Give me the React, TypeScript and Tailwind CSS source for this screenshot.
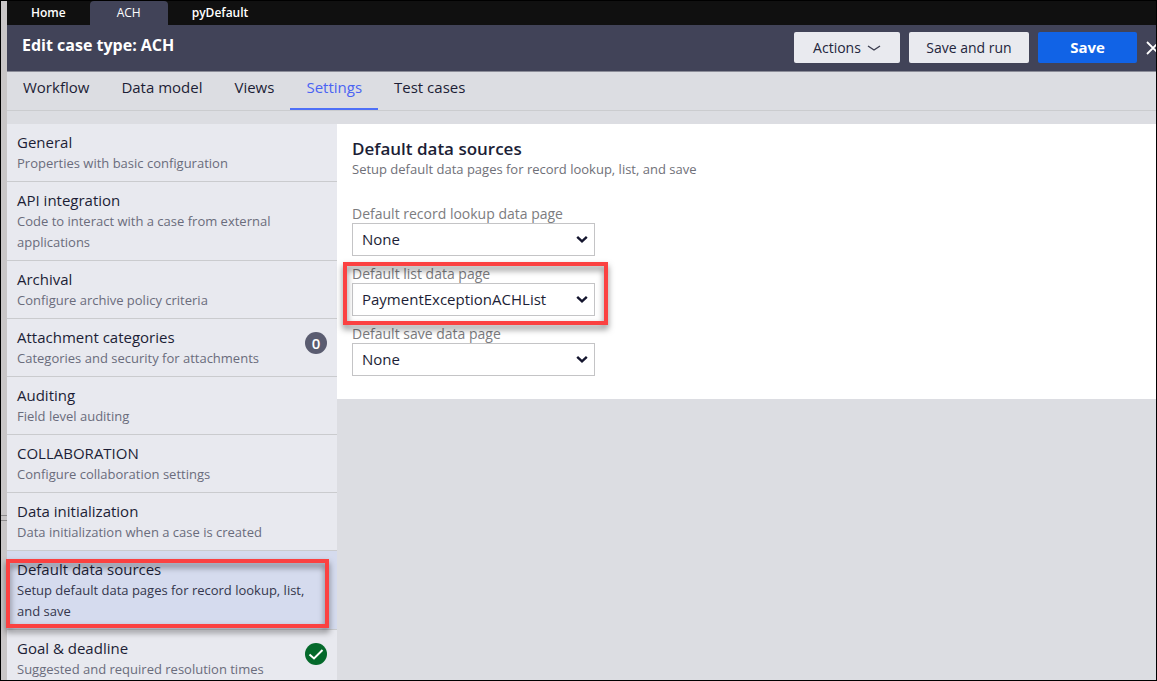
import { useState } from "react";
import clsx from "clsx";

type Setting = {
  title: string;
  description: string;
  count?: number;
  done?: boolean;
};

const recordTabs = ["Home", "ACH", "pyDefault"];

const caseTabs = ["Workflow", "Data model", "Views", "Settings", "Test cases"];

const settings: Setting[] = [
  { title: "General", description: "Properties with basic configuration" },
  {
    title: "API integration",
    description: "Code to interact with a case from external applications",
  },
  { title: "Archival", description: "Configure archive policy criteria" },
  {
    title: "Attachment categories",
    description: "Categories and security for attachments",
    count: 0,
  },
  { title: "Auditing", description: "Field level auditing" },
  { title: "COLLABORATION", description: "Configure collaboration settings" },
  {
    title: "Data initialization",
    description: "Data initialization when a case is created",
  },
  {
    title: "Default data sources",
    description: "Setup default data pages for record lookup, list, and save",
  },
  {
    title: "Goal & deadline",
    description: "Suggested and required resolution times",
    done: true,
  },
];

const fields = [
  { id: "lookup", label: "Default record lookup data page", value: "None" },
  {
    id: "list",
    label: "Default list data page",
    value: "PaymentExceptionACHList",
    marked: true,
  },
  { id: "save", label: "Default save data page", value: "None" },
];

// Red frame that points out a part of the screen
function Callout({ className }: { className: string }) {
  return (
    <div
      className={clsx(
        "pointer-events-none absolute z-10 border-4 border-[#fb4141] drop-shadow-[0_4px_3px_rgba(0,0,0,0.5)]",
        className
      )}
    />
  );
}

function RecordTabs() {
  return (
    <div className="flex h-6 bg-[#101010] text-[12px] text-white">
      {recordTabs.map((tab) => (
        <button
          key={tab}
          className={clsx(
            "leading-6",
            tab === "ACH"
              ? "rounded-t-sm bg-[#414358] px-[27px]"
              : "px-6 font-semibold"
          )}
        >
          {tab}
        </button>
      ))}
    </div>
  );
}

function Header() {
  return (
    <header className="flex h-[47px] items-center justify-between border-b border-[#8b8c98] bg-[#414358] pb-px pl-[15px]">
      <h1 className="flex gap-1 pb-[6px] text-[16px] font-bold text-white">
        <span>Edit case type:</span>
        <span>ACH</span>
      </h1>

      <div className="-mr-[9px] flex shrink-0 items-center gap-[9px] text-[14px] text-[#23253c]">
        <button className="flex h-[31px] w-[106px] items-center justify-center gap-[6px] rounded-xs bg-[#e9eaef]">
          Actions
          <svg width="14" height="8" viewBox="0 0 14 8" fill="none">
            <path d="M1 2 L7 6 L13 2" stroke="#3b3d4e" strokeWidth="1.4" />
          </svg>
        </button>
        <button className="h-[31px] w-[120px] rounded-xs bg-[#e9eaef]">
          Save and run
        </button>
        <button className="h-[31px] w-[99px] rounded-xs bg-[#1163e6] text-[15px] font-bold text-white">
          Save
        </button>
        <button aria-label="Close">
          <svg width="19" height="14" viewBox="0 0 19 14" fill="none">
            <path d="M1 1 L13 13 M13 1 L1 13" stroke="white" strokeWidth="1.8" />
          </svg>
        </button>
      </div>
    </header>
  );
}

export default function App() {
  const [tab, setTab] = useState("Settings");
  const [active, setActive] = useState("Default data sources");

  return (
    <div className="flex h-screen overflow-hidden border border-black bg-[#dcdde2] font-['Open_Sans',sans-serif] text-[#1c1e36]">
      {/* Resize gutter */}
      <div className="relative w-[6px] shrink-0 bg-[#c9c6c7]">
        <div className="absolute top-[514px] h-[6px] w-full border-y border-[#8e8c8d]" />
      </div>

      <div className="flex min-w-0 flex-1 flex-col">
        <RecordTabs />
        <Header />

        <nav className="flex h-[39px] shrink-0 border-b border-[#cbcccf] text-[15px]">
          {caseTabs.map((name) => (
            <button
              key={name}
              onClick={() => setTab(name)}
              className={clsx(
                "border-b-2 px-4 pb-[5px]",
                name === tab
                  ? "border-[#4f70f7] text-[#4a63f2]"
                  : "border-transparent"
              )}
            >
              {name}
            </button>
          ))}
        </nav>

        <main className="mt-[13px] flex min-h-0 flex-1 items-start">
          {/* Settings list */}
          <ul className="w-[330px] shrink-0 bg-[#e8e9ef]">
            {settings.map((item) => (
              <li key={item.title} className="relative">
                <button
                  onClick={() => setActive(item.title)}
                  className={clsx(
                    "flex w-full items-start justify-between border-b border-[#cacbce] px-[10px] py-[7px] text-left",
                    item.title === active && "bg-[#d5dbee]"
                  )}
                >
                  <span className="max-w-[300px]">
                    <span className="block text-[15px] leading-[22px]">
                      {item.title}
                    </span>
                    <span
                      className={clsx(
                        "block text-[13px] leading-[21px]",
                        item.title === active
                          ? "text-[#34364c]"
                          : "text-[#6a6c7c]"
                      )}
                    >
                      {item.description}
                    </span>
                  </span>
                  {item.count !== undefined && (
                    <span className="mt-[6px] flex size-[22px] shrink-0 items-center justify-center rounded-full bg-[#5a5c70] text-[15px] leading-[20px] font-semibold text-white">
                      {item.count}
                    </span>
                  )}
                  {item.done && (
                    <svg
                      className="mt-[6px]"
                      width="22"
                      height="22"
                      viewBox="0 0 22 22"
                      fill="none"
                    >
                      <circle cx="11" cy="11" r="11" fill="#04692b" />
                      <path
                        d="M4.5 11.5 L9 15.5 L17.5 7"
                        stroke="white"
                        strokeWidth="2"
                      />
                    </svg>
                  )}
                </button>
                {item.title === "Default data sources" && (
                  <Callout className="top-2 right-2 bottom-[2px] -left-px" />
                )}
              </li>
            ))}
          </ul>

          {/* Selected setting */}
          <section className="min-w-0 flex-1 bg-white px-[15px] pt-[15px] pb-[23px]">
            <h2 className="text-[17px] leading-[20px] font-semibold">
              Default data sources
            </h2>
            <p className="text-[13px] leading-[20px] text-[#6f7078]">
              Setup default data pages for record lookup, list, and save
            </p>

            <div className="mt-[25px] flex flex-col gap-[8px]">
              {fields.map((field) => (
                <div key={field.id} className="relative w-[243px]">
                  <label
                    htmlFor={field.id}
                    className="block text-[14px] leading-[19px] whitespace-nowrap text-[#7c7c80]"
                  >
                    {field.label}
                  </label>
                  <div className="relative">
                    <select
                      id={field.id}
                      defaultValue={field.value}
                      className="block h-[33px] w-full appearance-none border border-[#c4c4c6] bg-white px-[9px] text-[15px]"
                    >
                      <option>{field.value}</option>
                    </select>
                    <svg
                      className="pointer-events-none absolute top-3 right-[7px]"
                      width="12"
                      height="9"
                      viewBox="0 0 12 9"
                      fill="none"
                    >
                      <path
                        d="M1.2 1.8 L6 6.4 L10.8 1.8"
                        stroke="#14152e"
                        strokeWidth="2.4"
                      />
                    </svg>
                  </div>
                  {field.marked && (
                    <Callout className="-top-[2px] -right-[13px] -bottom-[9px] -left-[9px]" />
                  )}
                </div>
              ))}
            </div>
          </section>
        </main>
      </div>
    </div>
  );
}
